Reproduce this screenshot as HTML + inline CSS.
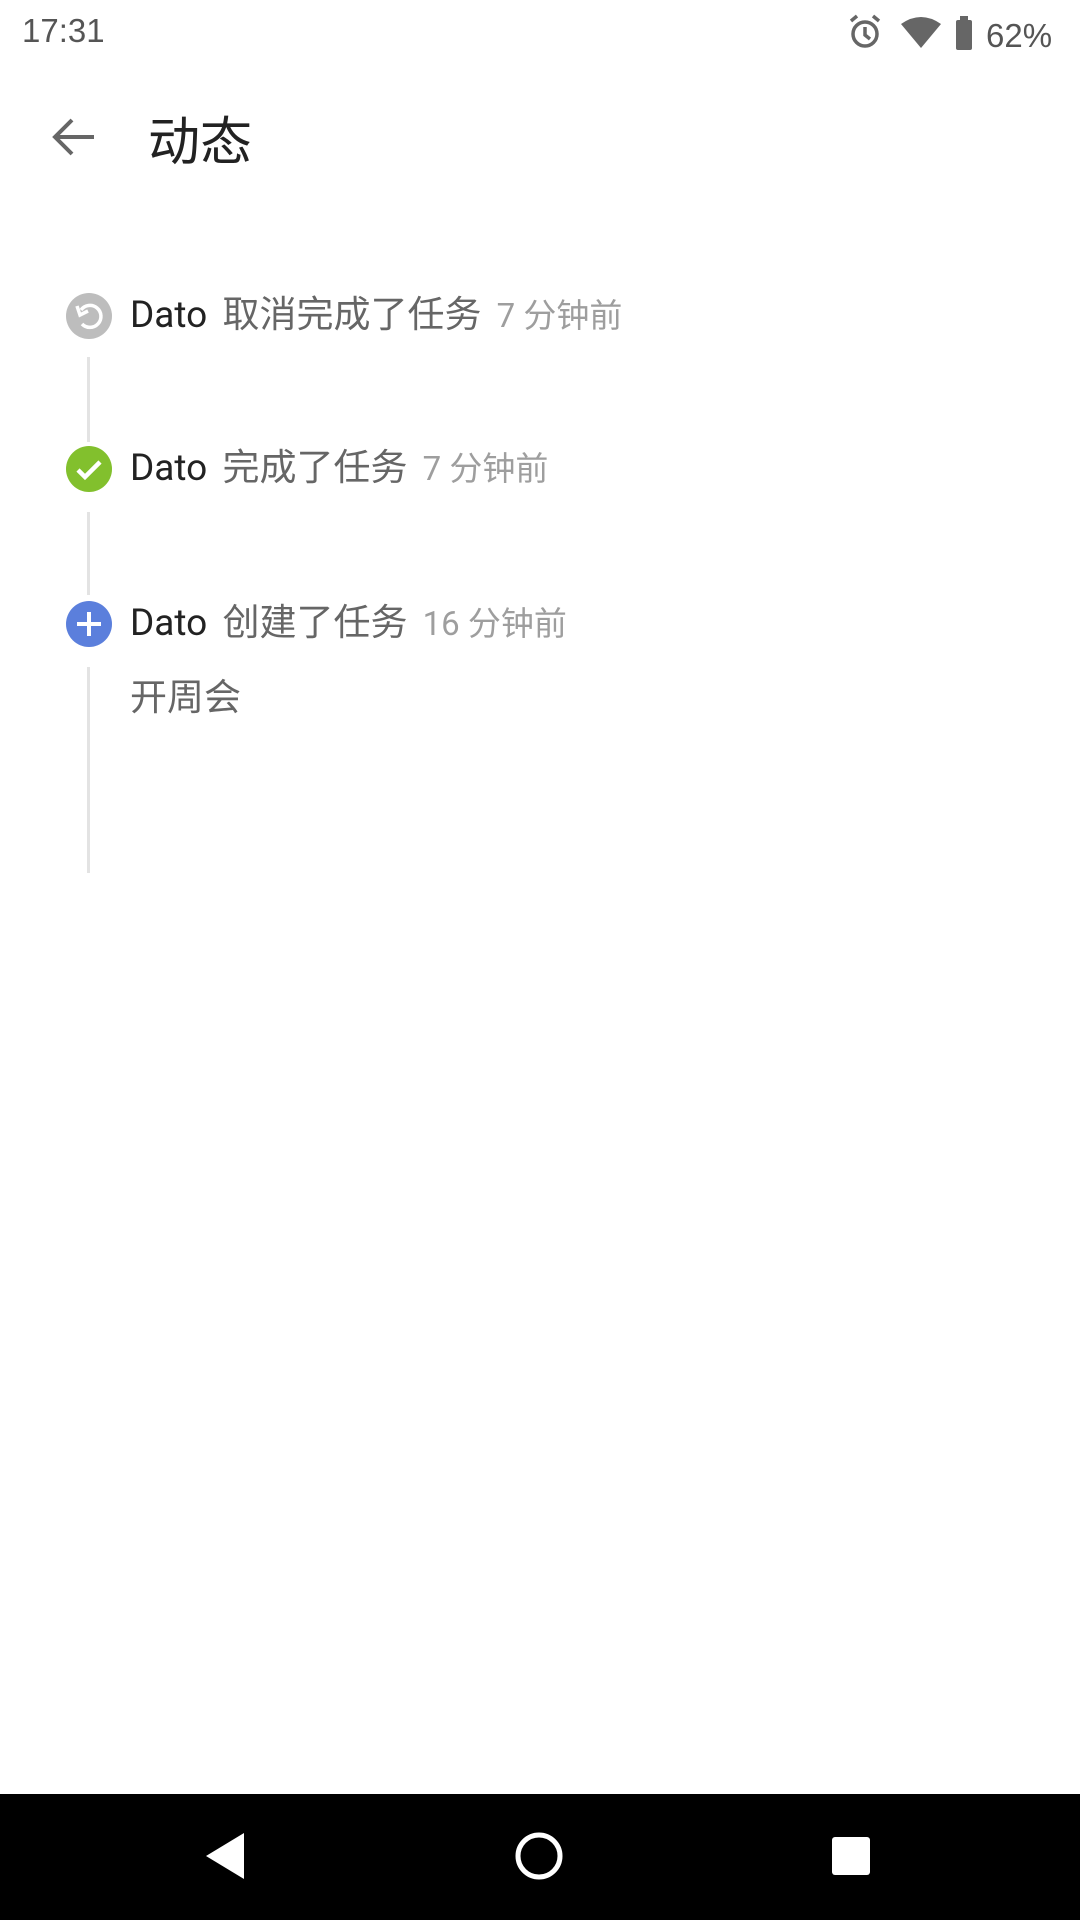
<!DOCTYPE html>
<html><head><meta charset="utf-8"><style>
body{margin:0;width:1080px;height:1920px;background:#fff;position:relative;overflow:hidden;font-family:"Liberation Sans","Noto Sans CJK SC",sans-serif;}
.a{position:absolute}
.row{position:absolute;left:130px;font-size:37px;line-height:44px;white-space:nowrap;font-family:"Roboto","Liberation Sans","Noto Sans CJK SC",sans-serif}
.n{color:#222}.v{color:#666;margin-left:6px}.t{color:#9e9e9e;margin-left:6px;font-size:33px}
.line{position:absolute;left:87px;width:3px;background:#e3e3e3}
.ic{position:absolute;left:66px;width:46px;height:46px;border-radius:50%}
</style></head><body>
<div class="a" style="left:22px;top:12px;font-size:33px;color:#555">17:31</div>
<svg class="a" style="left:846px;top:12px" width="212" height="42" viewBox="0 0 212 42">
<g fill="none" stroke="#666" stroke-width="3.5"><circle cx="19" cy="22" r="12"/><path d="M19 15v8l5 4"/><path d="M5 9l6-5M33 9l-6-5"/></g>
<path d="M55 12q20-14 40 0l-20 24z" fill="#666"/>
<rect x="110" y="8" width="16" height="30" rx="2" fill="#666"/><rect x="114" y="4" width="8" height="5" fill="#666"/>
<text x="140" y="35" font-size="33" fill="#555" font-family="Liberation Sans">62%</text>
</svg>
<svg class="a" style="left:50px;top:116px" width="46" height="42" viewBox="0 0 46 42"><path d="M44 21H6M22 4L5 21l17 17" fill="none" stroke="#666" stroke-width="4"/></svg>
<div class="a" style="left:148px;top:100px;font-size:52px;color:#222;font-family:'Noto Sans CJK SC',sans-serif">动态</div>

<div class="ic" style="top:293px;background:#bdbdbd"><svg width="46" height="46" viewBox="0 0 46 46"><path d="M15 17a11 11 0 1 1 1 14" fill="none" stroke="#fff" stroke-width="3.5"/><path d="M11 13l3 9 8-4" fill="none" stroke="#fff" stroke-width="3.5"/></svg></div>
<div class="row" style="top:294px"><span class="n">Dato</span> <span class="v">取消完成了任务</span> <span class="t">7 分钟前</span></div>
<div class="line" style="top:357px;height:85px"></div>

<div class="ic" style="top:446px;background:#82c02d"><svg width="46" height="46" viewBox="0 0 46 46"><path d="M12 24l7 7 15-15" fill="none" stroke="#fff" stroke-width="4.5"/></svg></div>
<div class="row" style="top:447px"><span class="n">Dato</span> <span class="v">完成了任务</span> <span class="t">7 分钟前</span></div>
<div class="line" style="top:512px;height:83px"></div>

<div class="ic" style="top:601px;background:#5b7fdc"><svg width="46" height="46" viewBox="0 0 46 46"><path d="M23 11v24M11 23h24" stroke="#fff" stroke-width="4"/></svg></div>
<div class="row" style="top:602px"><span class="n">Dato</span> <span class="v">创建了任务</span> <span class="t">16 分钟前</span></div>
<div class="row" style="top:677px;color:#666">开周会</div>
<div class="line" style="top:667px;height:206px"></div>

<div class="a" style="left:0;top:1794px;width:1080px;height:126px;background:#000"></div>
<svg class="a" style="left:0;top:1794px" width="1080" height="126">
<path d="M244 39v46l-38-23z" fill="#fff"/>
<circle cx="539" cy="62" r="21" fill="none" stroke="#fff" stroke-width="5"/>
<rect x="832" y="43" width="38" height="38" rx="3" fill="#fff"/>
</svg>
</body></html>
